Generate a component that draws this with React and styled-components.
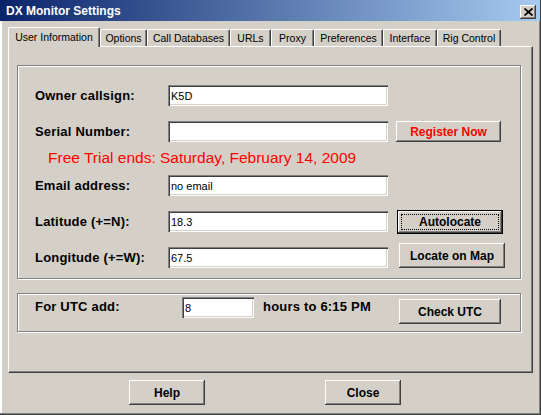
import React from "react";
import styled, { createGlobalStyle } from "styled-components";

const GlobalStyle = createGlobalStyle`
  html, body {
    margin: 0;
    padding: 0;
    background: #d4d0c8;
  }
  * {
    box-sizing: border-box;
  }
`;

const raised = `
  box-shadow: inset -1px -1px #404040, inset 1px 1px #ffffff,
    inset -2px -2px #808080, inset 2px 2px #d4d0c8;
`;

const Window = styled.div`
  width: 541px;
  height: 415px;
  background: #d4d0c8;
  display: flex;
  flex-direction: column;
  font-family: "Liberation Sans", Arial, sans-serif;
  box-shadow: inset -1px -1px #404040, inset -2px -2px #808080,
    inset 2px 2px #ffffff;
  overflow: hidden;
`;

const TitleBar = styled.div`
  height: 21px;
  margin-right: 1px;
  display: flex;
  align-items: center;
  justify-content: space-between;
  padding: 0 4px 0 6px;
  background: linear-gradient(to right, #0a246a, #a6caf0);
  color: #ffffff;
  font-size: 12px;
  font-weight: bold;
`;

const CloseBox = styled.div`
  width: 16px;
  height: 14px;
  margin-top: 3px;
  background: #d4d0c8;
  display: flex;
  align-items: center;
  justify-content: center;
  ${raised}
`;

const Body = styled.div`
  flex: 1;
  display: flex;
  flex-direction: column;
  padding: 6px 8px 0 8px;
`;

const TabStrip = styled.div`
  height: 19px;
  display: flex;
  align-items: flex-end;
`;

const Tab = styled.div`
  width: ${(p) => p.$w}px;
  height: ${(p) => (p.$active ? 20 : 17)}px;
  margin-bottom: ${(p) => (p.$active ? -1 : 0)}px;
  position: relative;
  z-index: ${(p) => (p.$active ? 2 : 0)};
  background: #d4d0c8;
  border-top: 1px solid #ffffff;
  border-left: 1px solid #ffffff;
  border-right: 1px solid #404040;
  border-radius: 2px 2px 0 0;
  box-shadow: inset -1px 0 #808080;
  display: flex;
  align-items: center;
  justify-content: center;
  padding-bottom: ${(p) => (p.$active ? 2 : 0)}px;
  font-size: 10.5px;
  color: #000000;
  white-space: nowrap;
`;

const Panel = styled.div`
  width: 525px;
  height: 327px;
  position: relative;
  z-index: 1;
  border-top: 1px solid #ffffff;
  border-left: 1px solid #ffffff;
  border-right: 1px solid #404040;
  border-bottom: 1px solid #404040;
  box-shadow: inset -1px -1px #808080;
  padding: 18px 0 0 8px;
  display: flex;
  flex-direction: column;
  gap: 14px;
`;

const Group = styled.div`
  width: 504px;
  height: ${(p) => p.$h}px;
  border: 1px solid #808080;
  box-shadow: inset 1px 1px #ffffff, 1px 1px #ffffff;
  padding: ${(p) => p.$pad};
  display: flex;
  flex-direction: column;
`;

const Row = styled.div`
  height: 21px;
  display: flex;
  align-items: ${(p) => p.$align || "center"};
  margin-bottom: ${(p) => p.$mb || 0}px;
`;

const Label = styled.div`
  width: ${(p) => p.$w}px;
  flex-shrink: 0;
  margin-top: ${(p) => p.$mt || 0}px;
  margin-left: ${(p) => p.$ml || 0}px;
  font-size: 13px;
  line-height: 13px;
  font-weight: bold;
  letter-spacing: 0.2px;
  color: #000000;
  white-space: nowrap;
`;

const Field = styled.div`
  width: ${(p) => p.$w}px;
  height: 21px;
  flex-shrink: 0;
  background: #ffffff;
  box-shadow: inset 1px 1px #808080, inset 2px 2px #404040,
    inset -1px -1px #ffffff, inset -2px -2px #d4d0c8;
  padding: 0 3px;
  display: flex;
  align-items: center;
  font-size: 11px;
  color: #000000;
`;

const Button = styled.div`
  width: ${(p) => p.$w}px;
  height: ${(p) => p.$h}px;
  flex-shrink: 0;
  margin-left: ${(p) => (p.$ml === "auto" ? "auto" : `${p.$ml || 0}px`)};
  margin-top: ${(p) => p.$mt || 0}px;
  margin-bottom: ${(p) => p.$mb || 0}px;
  background: #d4d0c8;
  display: flex;
  align-items: center;
  justify-content: center;
  font-size: 12px;
  font-weight: bold;
  color: ${(p) => (p.$red ? "#ff0000" : "#000000")};
  position: relative;
  ${(p) =>
    p.$focused
      ? `
    border: 1px solid #000000;
    box-shadow: inset -1px -1px #404040, inset 1px 1px #ffffff,
      inset -2px -2px #808080;
    &::after {
      content: "";
      position: absolute;
      left: 3px;
      top: 3px;
      right: 3px;
      bottom: 3px;
      border: 1px dotted #000000;
    }
  `
      : raised}
`;

const Notice = styled.div`
  margin: 7px 0 8px 13px;
  height: 18px;
  line-height: 18px;
  font-size: 15.5px;
  color: #ff0000;
  white-space: nowrap;
`;

const Footer = styled.div`
  display: flex;
  gap: 120px;
  padding: 7px 0 0 121px;
`;

const tabs = [
  ["User Information", 92],
  ["Options", 47],
  ["Call Databases", 83],
  ["URLs", 41],
  ["Proxy", 43],
  ["Preferences", 69],
  ["Interface", 54],
  ["Rig Control", 64],
];

const CloseGlyph = () => (
  <svg width="9" height="8" viewBox="0 0 9 8">
    <path d="M0.5 0.5 L8.5 7.5 M8.5 0.5 L0.5 7.5" stroke="#000" strokeWidth="1.8" fill="none" />
  </svg>
);

export default function App() {
  return (
    <>
      <GlobalStyle />
      <Window>
        <TitleBar>
          <span>DX Monitor Settings</span>
          <CloseBox>
            <CloseGlyph />
          </CloseBox>
        </TitleBar>
        <Body>
          <TabStrip>
            {tabs.map(([name, w], i) => (
              <Tab key={name} $w={w} $active={i === 0}>
                {name}
              </Tab>
            ))}
          </TabStrip>
          <Panel>
            <Group $h={214} $pad="19px 0 0 17px">
              <Row $mb={15}>
                <Label $w={133}>Owner callsign:</Label>
                <Field $w={220}>K5D</Field>
              </Row>
              <Row>
                <Label $w={133}>Serial Number:</Label>
                <Field $w={220} />
                <Button $w={105} $h={21} $ml={8} $red>
                  Register Now
                </Button>
              </Row>
              <Notice>Free Trial ends: Saturday, February 14, 2009</Notice>
              <Row $mb={15}>
                <Label $w={133}>Email address:</Label>
                <Field $w={220}>no email</Field>
              </Row>
              <Row $mb={15}>
                <Label $w={133}>Latitude (+=N):</Label>
                <Field $w={220}>18.3</Field>
                <Button $w={106} $h={24} $ml={9} $focused>
                  Autolocate
                </Button>
              </Row>
              <Row>
                <Label $w={133}>Longitude (+=W):</Label>
                <Field $w={220}>67.5</Field>
                <Button $w={106} $h={25} $ml={11} $mb={4}>
                  Locate on Map
                </Button>
              </Row>
            </Group>
            <Group $h={39} $pad="3px 19px 0 17px">
              <Row $align="flex-start">
                <Label $w={147} $mt={3}>For UTC add:</Label>
                <Field $w={72}>8</Field>
                <Label $w={112} $ml={9} $mt={3}>hours to 6:15 PM</Label>
                <Button $w={102} $h={25} $ml="auto" $mt={2}>
                  Check UTC
                </Button>
              </Row>
            </Group>
          </Panel>
          <Footer>
            <Button $w={76} $h={25}>Help</Button>
            <Button $w={76} $h={25}>Close</Button>
          </Footer>
        </Body>
      </Window>
    </>
  );
}
